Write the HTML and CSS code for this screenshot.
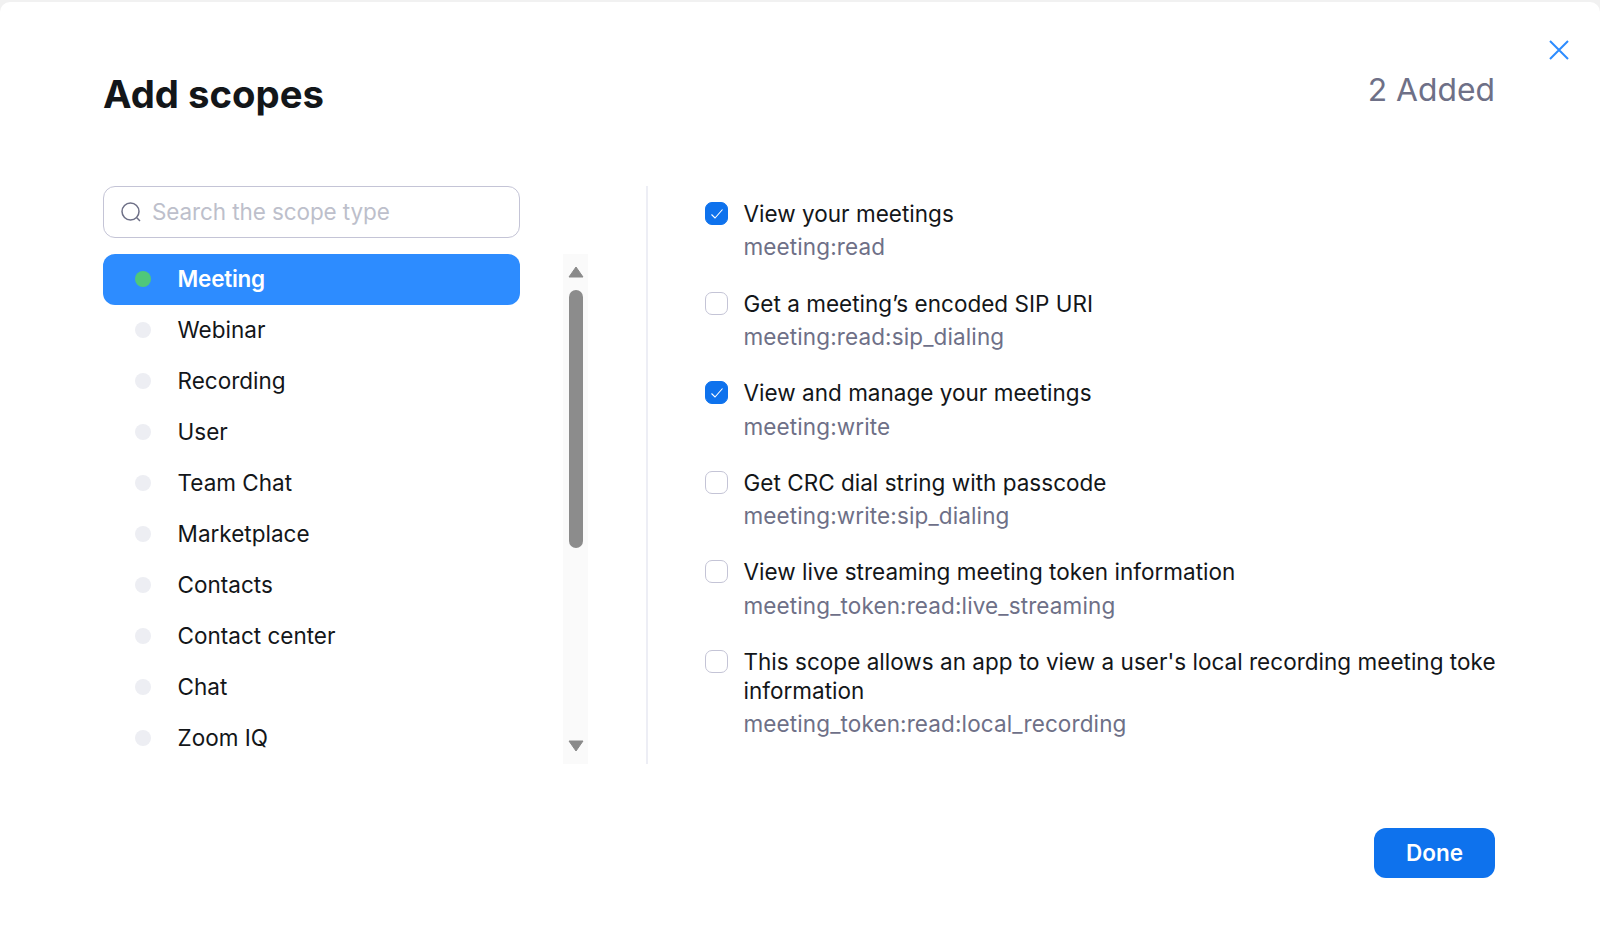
FILE: index.html
```html
<!DOCTYPE html>
<html lang="en">
<head>
<meta charset="utf-8">
<title>Add scopes</title>
<link rel="stylesheet" href="styles.css">
</head>
<body>
<div class="modal">
  <button class="close" aria-label="Close">
    <svg width="20" height="20" viewBox="0 0 20 20"><path d="M1 1L19 19M19 1L1 19" stroke="#2d8cff" stroke-width="2" fill="none"/></svg>
  </button>
  <header class="head">
    <h1 class="title">Add scopes</h1>
    <div class="added">2 Added</div>
  </header>
  <div class="body">
    <aside class="left">
      <div class="cats">
        <div class="search">
          <svg class="search-icon" width="22" height="22" viewBox="0 0 22 22"><circle cx="10.5" cy="10.5" r="8.5" fill="none" stroke="#6e7087" stroke-width="1.5"/><path d="M16.8 16.8L20 20" stroke="#6e7087" stroke-width="1.5" fill="none"/></svg>
          <span class="placeholder">Search the scope type</span>
        </div>
        <ul class="cat-list">
          <li class="cat active"><i class="dot"></i>Meeting</li>
          <li class="cat"><i class="dot"></i>Webinar</li>
          <li class="cat"><i class="dot"></i>Recording</li>
          <li class="cat"><i class="dot"></i>User</li>
          <li class="cat"><i class="dot"></i>Team Chat</li>
          <li class="cat"><i class="dot"></i>Marketplace</li>
          <li class="cat"><i class="dot"></i>Contacts</li>
          <li class="cat"><i class="dot"></i>Contact center</li>
          <li class="cat"><i class="dot"></i>Chat</li>
          <li class="cat"><i class="dot"></i>Zoom IQ</li>
        </ul>
      </div>
      <div class="scrollbar">
        <svg class="arrow-up" width="16" height="12" viewBox="0 0 16 12"><path d="M8 1L15 11H1Z" fill="#8a8a8a" stroke="#8a8a8a" stroke-width="1" stroke-linejoin="round"/></svg>
        <div class="thumb"></div>
        <svg class="arrow-down" width="16" height="12" viewBox="0 0 16 12"><path d="M1 1H15L8 11Z" fill="#8a8a8a" stroke="#8a8a8a" stroke-width="1" stroke-linejoin="round"/></svg>
      </div>
    </aside>
    <section class="scopes">
      <div class="scope">
        <span class="box checked"><svg width="14" height="12" viewBox="0 0 14 12"><path d="M1.5 6.5L5 10L12.5 1.5" stroke="#fff" stroke-width="1.1" fill="none"/></svg></span>
        <div class="scope-text"><div class="scope-name">View your meetings</div><div class="scope-id">meeting:read</div></div>
      </div>
      <div class="scope">
        <span class="box"></span>
        <div class="scope-text"><div class="scope-name">Get a meeting’s encoded SIP URI</div><div class="scope-id">meeting:read:sip_dialing</div></div>
      </div>
      <div class="scope">
        <span class="box checked"><svg width="14" height="12" viewBox="0 0 14 12"><path d="M1.5 6.5L5 10L12.5 1.5" stroke="#fff" stroke-width="1.1" fill="none"/></svg></span>
        <div class="scope-text"><div class="scope-name">View and manage your meetings</div><div class="scope-id">meeting:write</div></div>
      </div>
      <div class="scope">
        <span class="box"></span>
        <div class="scope-text"><div class="scope-name">Get CRC dial string with passcode</div><div class="scope-id">meeting:write:sip_dialing</div></div>
      </div>
      <div class="scope">
        <span class="box"></span>
        <div class="scope-text"><div class="scope-name">View live streaming meeting token information</div><div class="scope-id">meeting_token:read:live_streaming</div></div>
      </div>
      <div class="scope">
        <span class="box"></span>
        <div class="scope-text"><div class="scope-name">This scope allows an app to view a user's local recording meeting token<br>information</div><div class="scope-id">meeting_token:read:local_recording</div></div>
      </div>
    </section>
  </div>
  <footer class="foot"><button class="done">Done</button></footer>
</div>
</body>
</html>
```
FILE: styles.css
```css
* { box-sizing: border-box; }
html, body { margin: 0; height: 100%; }
body {
  background: #f1f1f1;
  padding-top: 2px;
  font-family: Inter, "Liberation Sans", sans-serif;
  overflow: hidden;
}
.modal {
  position: relative;
  background: #fff;
  height: 932px;
  border-radius: 10px 10px 0 0;
  padding: 0 105px 0 103px;
}
.close {
  position: absolute;
  top: 38px;
  right: 31px;
  width: 20px;
  height: 20px;
  padding: 0;
  border: 0;
  background: none;
  display: flex;
}
.head {
  display: flex;
  justify-content: space-between;
  height: 184px;
}
.title {
  margin: 67px 0 0;
  font-size: 38.3px;
  line-height: 50px;
  font-weight: 700;
  color: #131619;
}
.added {
  margin-top: 68px;
  font-size: 31.8px;
  line-height: 40px;
  color: #6e7087;
}
.body {
  display: flex;
  height: 578px;
}
.left {
  display: flex;
  width: 545px;
  border-right: 2px solid #edeef5;
  flex: none;
}
.cats { width: 416.5px; flex: none; }
.search {
  display: flex;
  align-items: center;
  height: 52px;
  padding: 0 0 1px 16px;
  border: 1px solid #c4c4d6;
  border-radius: 12px;
}
.search-icon { flex: none; }
.placeholder {
  margin-left: 10px;
  font-size: 22.5px;
  letter-spacing: -0.1px;
  color: #bdbfcb;
}
.cat-list {
  list-style: none;
  margin: 16px 0 0;
  padding: 0;
}
.cat {
  display: flex;
  align-items: center;
  height: 51px;
  padding: 0 0 2px 32px;
  font-size: 22.5px;
  color: #131619;
}
.cat.active {
  background: #2d8cff;
  border-radius: 12px;
  color: #fff;
  font-weight: 600;
  letter-spacing: -0.25px;
}
.dot {
  width: 16px;
  height: 16px;
  border-radius: 50%;
  background: #edeef3;
  margin-right: 26.6px;
  flex: none;
}
.active .dot { background: #4fc87a; }
.scrollbar {
  margin: 68px 0 0 43.5px;
  width: 25px;
  height: 510px;
  background: #fafafa;
  display: flex;
  flex-direction: column;
  align-items: center;
  position: relative;
}
.arrow-up { margin-top: 12px; }
.thumb {
  width: 14px;
  height: 258px;
  border-radius: 7px;
  background: #8c8c8c;
  margin-top: 12px;
}
.arrow-down { margin-top: auto; margin-bottom: 12px; }
.scopes {
  flex: 1;
  min-width: 0;
  overflow: hidden;
  padding: 16px 0 0 57px;
}
.scope {
  display: flex;
  gap: 15.5px;
  margin-bottom: 30.2px;
}
.box {
  width: 23px;
  height: 23px;
  border: 1px solid #c4c4d6;
  border-radius: 7px;
  flex: none;
  background: #fff;
  display: flex;
  align-items: center;
  justify-content: center;
}
.box.checked {
  background: #0e72ed;
  border-color: #0e72ed;
}
.scope-text { min-width: 0; white-space: nowrap; }
.scope-name {
  font-size: 22.5px;
  line-height: 29px;
  color: #131619;
  letter-spacing: 0.02px;
  margin-top: -3px;
}
.scope-id {
  font-size: 22.5px;
  line-height: 29px;
  letter-spacing: 0.12px;
  margin-top: 4.4px;
  color: #6e7087;
}
.foot {
  display: flex;
  justify-content: flex-end;
  margin-top: 64px;
}
.done {
  width: 121px;
  height: 50px;
  padding: 0 0 2px;
  border: 0;
  border-radius: 12px;
  background: #0e72ed;
  color: #fff;
  font: 600 22.5px Inter, "Liberation Sans", sans-serif;
}
```
